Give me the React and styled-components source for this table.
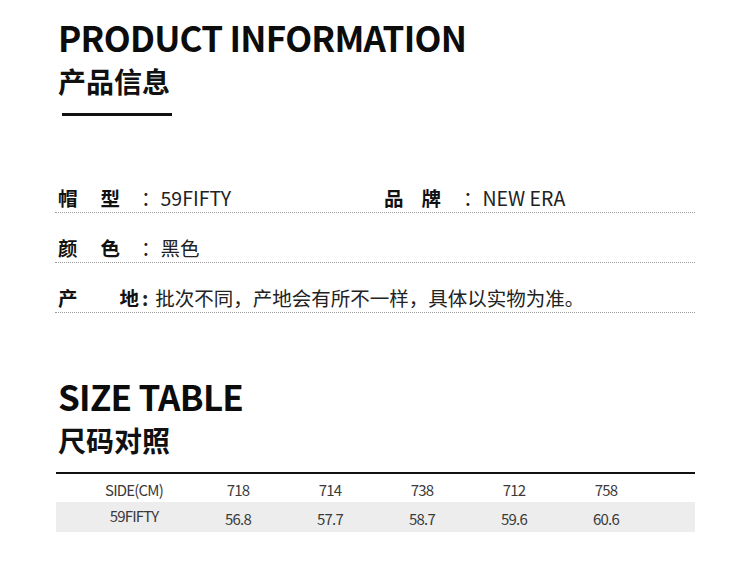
import styled, { createGlobalStyle } from "styled-components";

const GlobalStyle = createGlobalStyle`
    body {
        margin: 0;
        background: #fff;
        font-family: "Noto Sans CJK SC", "Noto Sans", sans-serif;
        color: #111;
    }
`;

const Page = styled.div`
    width: 750px;
    height: 585px;
    box-sizing: border-box;
    padding: 0 55px 0 55px;
    overflow: hidden;
`;

const EnTitle = styled.h1`
    margin: ${(props) => props.top}px 0 0 3px;
    font-size: 35px;
    line-height: 48px;
    font-weight: 700;
    letter-spacing: -0.75px;
    color: #0c0c0c;
`;

const CnTitle = styled.h2`
    margin: 0 0 0 3px;
    font-size: 28px;
    line-height: 40px;
    font-weight: 700;
    color: #111;
`;

const Underline = styled.div`
    width: 110px;
    height: 3px;
    margin: 12px 0 0 7px;
    background: #111;
`;

const InfoList = styled.div`
    margin-top: 47px;
`;

const InfoRow = styled.div`
    display: flex;
    align-items: flex-end;
    height: 50px;
    box-sizing: border-box;
    padding: 0 0 0 3px;
    border-bottom: 1px dotted #9a9a9a;
    font-size: 19.5px;
    line-height: 28px;
`;

const Field = styled.div`
    display: flex;
    align-items: center;
    width: ${(props) => props.width || "auto"};
`;

const Key = styled.span`
    display: flex;
    justify-content: space-between;
    width: ${(props) => props.width}px;
    font-weight: 700;
    color: #111;
`;

const Colon = styled.span`
    margin-left: ${(props) => props.gap}px;
    font-weight: ${(props) => (props.bold ? 700 : 400)};
    color: #222;
`;

const Value = styled.span`
    margin-left: ${(props) => props.gap}px;
    color: #222;
`;

const Table = styled.div`
    margin-top: 12px;
    margin-left: 1px;
    border-top: 2px solid #111;
    font-size: 15px;
    color: #3a3a3a;
`;

const TableRow = styled.div`
    display: grid;
    grid-template-columns: 136px repeat(5, 92px) 1fr;
    align-items: center;
    height: ${(props) => props.height}px;
    background: ${(props) => (props.shaded ? "#ededed" : "transparent")};
`;

const Cell = styled.span`
    text-align: center;
    letter-spacing: -0.8px;
    padding-left: ${(props) => (props.first ? 20 : 0)}px;
    transform: translateY(${(props) => props.shift || 0}px);
`;

const sizes = [
    ["718", "56.8"],
    ["714", "57.7"],
    ["738", "58.7"],
    ["712", "59.6"],
    ["758", "60.6"],
];

export default function App() {
    return (
        <Page>
            <GlobalStyle />
            <EnTitle top={13}>PRODUCT INFORMATION</EnTitle>
            <CnTitle>产品信息</CnTitle>
            <Underline />

            <InfoList>
                <InfoRow>
                    <Field width="326px">
                        <Key width={62}>
                            <span>帽</span>
                            <span>型</span>
                        </Key>
                        <Colon gap={21}>：</Colon>
                        <Value gap={0}>59FIFTY</Value>
                    </Field>
                    <Field>
                        <Key width={57}>
                            <span>品</span>
                            <span>牌</span>
                        </Key>
                        <Colon gap={22}>：</Colon>
                        <Value gap={0}>NEW ERA</Value>
                    </Field>
                </InfoRow>
                <InfoRow>
                    <Field>
                        <Key width={62}>
                            <span>颜</span>
                            <span>色</span>
                        </Key>
                        <Colon gap={21}>：</Colon>
                        <Value gap={0}>黑色</Value>
                    </Field>
                </InfoRow>
                <InfoRow>
                    <Field>
                        <Key width={81}>
                            <span>产</span>
                            <span>地</span>
                        </Key>
                        <Colon gap={3} bold>
                            :
                        </Colon>
                        <Value gap={7}>批次不同，产地会有所不一样，具体以实物为准。</Value>
                    </Field>
                </InfoRow>
            </InfoList>

            <EnTitle top={59}>SIZE TABLE</EnTitle>
            <CnTitle>尺码对照</CnTitle>

            <Table>
                <TableRow height={28}>
                    <Cell first shift={1}>
                        SIDE(CM)
                    </Cell>
                    {sizes.map(([side]) => (
                        <Cell key={side} shift={1}>
                            {side}
                        </Cell>
                    ))}
                </TableRow>
                <TableRow height={30} shaded>
                    <Cell first shift={-2}>
                        59FIFTY
                    </Cell>
                    {sizes.map(([side, cm]) => (
                        <Cell key={side} shift={1}>
                            {cm}
                        </Cell>
                    ))}
                </TableRow>
            </Table>
        </Page>
    );
}
